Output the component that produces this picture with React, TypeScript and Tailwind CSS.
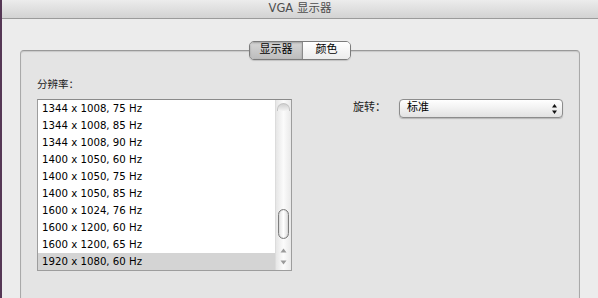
import React from 'react';

const resolutions = [
    '1344 x 1008, 75 Hz',
    '1344 x 1008, 85 Hz',
    '1344 x 1008, 90 Hz',
    '1400 x 1050, 60 Hz',
    '1400 x 1050, 75 Hz',
    '1400 x 1050, 85 Hz',
    '1600 x 1024, 76 Hz',
    '1600 x 1200, 60 Hz',
    '1600 x 1200, 65 Hz',
    '1920 x 1080, 60 Hz',
];

const fontStack = "font-['Lucida_Grande','DejaVu_Sans','Noto_Sans_CJK_SC',sans-serif]";

const ScrollBar: React.FC = () => (
    <div className="absolute right-0 top-0 bottom-0 w-[16px] border-l border-[#dcdcdc] bg-gradient-to-r from-[#e6e6e6] via-[#fbfbfb] to-[#e9e9e9] flex flex-col items-center">
        <div className="mt-[3px] w-[13px] h-[8px] rounded-t-full border-t border-x border-[#c4c4c4] bg-gradient-to-b from-[#d0d0d0] to-[#f4f4f4]" />
        <div className="flex-1" />
        <div className="w-[11px] h-[30px] rounded-full border border-[#7d7d7d] bg-gradient-to-r from-[#e2e2e2] via-[#ffffff] to-[#dcdcdc] shadow-[inset_0_0_1px_#999]" />
        <div className="mt-[5px] h-[12px] flex items-center justify-center">
            <svg width="7" height="5" viewBox="0 0 7 5">
                <path d="M3.5 0.5 L6.5 4.5 L0.5 4.5 Z" fill="#9a9a9a" />
            </svg>
        </div>
        <div className="h-[12px] mb-[2px] flex items-center justify-center">
            <svg width="7" height="5" viewBox="0 0 7 5">
                <path d="M0.5 0.5 L6.5 0.5 L3.5 4.5 Z" fill="#9a9a9a" />
            </svg>
        </div>
    </div>
);

export default function App() {
    return (
        <div className={`w-[598px] h-[298px] overflow-hidden bg-[#ececec] border-l-2 border-[#553755] flex flex-col ${fontStack}`}>
            <div className="h-[19px] shrink-0 flex items-center justify-center bg-gradient-to-b from-[#ececec] to-[#d3d3d3] border-b border-[#9b9b9b] text-[11.5px] text-[#4d4d4d]">
                VGA 显示器
            </div>
            <div className="flex-1 pt-[22px] px-[18px]">
                <div className="relative z-10 flex justify-center">
                    <div className="flex h-[19px] rounded-[5px] border border-[#7b7b7b] overflow-hidden text-[11px] text-black shadow-[0_1px_1px_rgba(0,0,0,0.15)]">
                        <div className="w-[53px] flex items-center justify-center bg-gradient-to-b from-[#d6d6d6] to-[#bdbdbd] border-r border-[#8a8a8a] shadow-[inset_0_1px_2px_rgba(0,0,0,0.25)]">
                            显示器
                        </div>
                        <div className="w-[47px] flex items-center justify-center bg-gradient-to-b from-[#ffffff] to-[#ececec]">
                            颜色
                        </div>
                    </div>
                </div>
                <div className="mt-[-10px] h-[260px] rounded-[4px] border border-[#a9a9a9] border-t-[#999] bg-[#e4e4e4] shadow-[inset_0_1px_1px_rgba(0,0,0,0.12)] pt-[27px] pl-[16px] pr-[16px] flex">
                    <div className="w-[255px] flex flex-col">
                        <div className="h-[13px] leading-[13px] text-[10.5px] text-[#222]">分辨率：</div>
                        <div className="relative mt-[8px] h-[172px] bg-white border border-[#9d9d9d] border-t-[#8a8a8a] overflow-hidden">
                            <div className="flex flex-col pr-[16px]">
                                {resolutions.map((res, idx) => (
                                    <div
                                        key={res}
                                        className={`h-[17px] leading-[17px] pl-[4px] text-[10.2px] text-black ${idx === resolutions.length - 1 ? 'bg-[#d4d4d4]' : ''}`}
                                    >
                                        {res}
                                    </div>
                                ))}
                            </div>
                            <ScrollBar />
                        </div>
                    </div>
                    <div className="ml-[61px] mt-[21px] flex items-center h-[19px]">
                        <div className="w-[46px] text-[11px] text-[#222]">旋转：</div>
                        <div className="w-[164px] h-[19px] rounded-[4px] border border-[#8c8c8c] bg-gradient-to-b from-[#ffffff] via-[#f1f1f1] to-[#e2e2e2] shadow-[0_1px_1px_rgba(0,0,0,0.2)] flex items-center pl-[7px] pr-[4px] text-[11px] text-black">
                            <span className="flex-1">标准</span>
                            <svg width="7" height="12" viewBox="0 0 7 12">
                                <path d="M3.5 1 L6 4.5 L1 4.5 Z" fill="#111" />
                                <path d="M1 7.5 L6 7.5 L3.5 11 Z" fill="#111" />
                            </svg>
                        </div>
                    </div>
                </div>
            </div>
        </div>
    );
}
